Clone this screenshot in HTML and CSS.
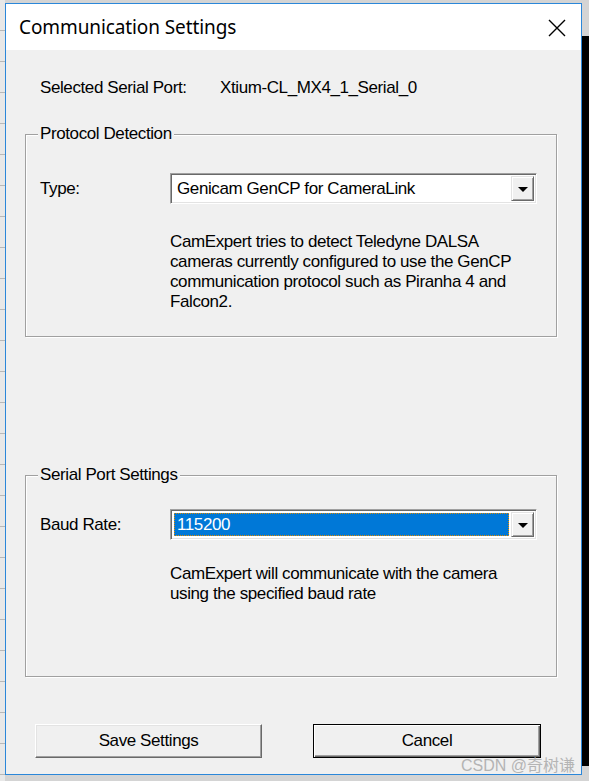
FILE: index.html
```html
<!DOCTYPE html>
<html>
<head>
<meta charset="utf-8">
<link rel="stylesheet" href="styles.css">
</head>
<body>
<div class="desktop">
  <div class="bg-left"></div>
  <div class="bg-right"></div>
  <div class="dialog">
    <div class="titlebar">
      <span class="title">Communication Settings</span>
      <svg class="close" width="18" height="18" viewBox="0 0 18 18"><path d="M1 1 L17 17 M17 1 L1 17" stroke="#000" stroke-width="1.4" fill="none"/></svg>
    </div>
    <div class="content">
      <div class="port-row">
        <span class="port-label">Selected Serial Port:</span>
        <span class="port-value">Xtium-CL_MX4_1_Serial_0</span>
      </div>

      <div class="group group-proto">
        <span class="legend">Protocol Detection</span>
        <div class="field-row">
          <span class="field-label">Type:</span>
          <div class="combo">
            <div class="combo-text">Genicam GenCP for CameraLink</div>
            <div class="combo-btn"><span class="tri"></span></div>
          </div>
        </div>
        <p class="desc desc-proto">CamExpert tries to detect Teledyne DALSA cameras currently configured to use the GenCP communication protocol such as Piranha 4 and Falcon2.</p>
      </div>

      <div class="group group-serial">
        <span class="legend">Serial Port Settings</span>
        <div class="field-row">
          <span class="field-label">Baud Rate:</span>
          <div class="combo">
            <div class="combo-text selected"><span class="focus">115200</span></div>
            <div class="combo-btn"><span class="tri"></span></div>
          </div>
        </div>
        <p class="desc desc-serial">CamExpert will communicate with the camera using the specified baud rate</p>
      </div>

      <div class="buttons">
        <div class="btn">Save Settings</div>
        <div class="btn default">Cancel</div>
      </div>
    </div>
    <span class="watermark">CSDN @奇树谦</span>
  </div>
</div>
</body>
</html>
```
FILE: styles.css
```css
html, body {
  margin: 0;
  padding: 0;
}
body {
  width: 589px;
  height: 781px;
  overflow: hidden;
  background: #cfcfcf;
  font-family: "Liberation Sans", Arial, sans-serif;
}
.desktop {
  position: relative;
  width: 589px;
  height: 781px;
  background: #d4d4d4;
}
.bg-left {
  position: absolute;
  left: 0;
  top: 0;
  width: 5px;
  height: 781px;
  background: repeating-linear-gradient(#e8e8e8 0 30px, #b8b8b8 30px 31px);
}
.bg-right {
  position: absolute;
  right: 0;
  top: 36px;
  width: 8px;
  height: 730px;
  background: #000;
}
.dialog {
  position: absolute;
  left: 5px;
  top: 3px;
  width: 575px;
  height: 770px;
  border: 1px solid #2b87d9;
  background: #f0f0f0;
  display: flex;
  flex-direction: column;
}
.titlebar {
  height: 46px;
  background: #fff;
  display: flex;
  align-items: center;
  justify-content: space-between;
  padding: 0 15px 0 13px;
  flex: none;
}
.title {
  font-family: "Noto Sans", "Open Sans", sans-serif;
  font-size: 19px;
  color: #000;
  letter-spacing: -0.1px;
}
.close {
  display: block;
  margin-top: 1px;
}
.content {
  padding: 28px 0 0 19px;
  font-size: 17px;
  letter-spacing: -0.4px;
  color: #000;
}
.port-row {
  display: flex;
  line-height: 20px;
  padding-left: 15px;
}
.port-label {
  width: 180px;
}
.group {
  position: relative;
  width: 532px;
  border: 1px solid #a0a0a0;
  box-shadow: inset 1px 1px 0 #fff, 1px 1px 0 #fff;
  box-sizing: border-box;
}
.group-proto {
  margin-top: 36px;
  height: 203px;
  padding-top: 38px;
}
.group-serial {
  margin-top: 138px;
  height: 202px;
  padding-top: 33px;
}
.legend {
  position: absolute;
  left: 12px;
  top: -11px;
  padding: 0 2px;
  line-height: 20px;
  background: #f0f0f0;
}
.field-row {
  display: flex;
  align-items: center;
  padding-left: 14px;
}
.field-label {
  width: 130px;
}
.combo {
  width: 367px;
  height: 31px;
  box-sizing: border-box;
  border-top: 1px solid #a0a0a0;
  border-left: 1px solid #a0a0a0;
  border-right: 1px solid #fff;
  border-bottom: 1px solid #fff;
  box-shadow: inset 1px 1px 0 #696969, inset -1px -1px 0 #e3e3e3;
  background: #fff;
  display: flex;
  padding: 2px;
}
.combo-text {
  flex: 1;
  line-height: 25px;
  padding-left: 4px;
}
.combo-text.selected {
  background: #0078d7;
  color: #fff;
  padding-left: 0;
  margin: 1px 2px 1px 1px;
  outline: 1px dotted #e28a00;
  outline-offset: -1px;
  line-height: 23px;
}
.focus {
  padding-left: 3px;
}
.combo-btn {
  width: 23px;
  height: 25px;
  box-sizing: border-box;
  background: #f0f0f0;
  border-top: 1px solid #e3e3e3;
  border-left: 1px solid #e3e3e3;
  border-right: 1px solid #696969;
  border-bottom: 1px solid #696969;
  box-shadow: inset 1px 1px 0 #fff, inset -1px -1px 0 #a0a0a0;
  display: flex;
  align-items: center;
  justify-content: center;
}
.tri {
  width: 0;
  height: 0;
  border-left: 5px solid transparent;
  border-right: 5px solid transparent;
  border-top: 5px solid #000;
  margin-top: 1px;
}
.desc {
  margin: 0;
  padding-left: 144px;
  line-height: 20px;
  width: 370px;
}
.desc-proto {
  margin-top: 28px;
}
.desc-serial {
  margin-top: 24px;
  width: 360px;
}
.buttons {
  display: flex;
  gap: 51px;
  margin-top: 47px;
  padding-left: 10px;
}
.btn {
  width: 227px;
  height: 34px;
  box-sizing: border-box;
  border-top: 1px solid #fff;
  border-left: 1px solid #fff;
  border-right: 1px solid #696969;
  border-bottom: 1px solid #696969;
  box-shadow: inset -1px -1px 0 #a0a0a0, inset 1px 1px 0 #e3e3e3;
  background: #f0f0f0;
  display: flex;
  align-items: center;
  justify-content: center;
  line-height: 20px;
}
.btn.default {
  border: 1px solid #000;
  box-shadow: inset 1px 1px 0 #fff, inset -1px -1px 0 #696969, inset -2px -2px 0 #a0a0a0;
  width: 228px;
}
.watermark {
  position: absolute;
  right: 6px;
  bottom: -2px;
  font-size: 16px;
  letter-spacing: 0;
  color: #b4b4b4;
  font-family: "Liberation Sans", "Noto Sans CJK SC", sans-serif;
  line-height: 20px;
}
```
